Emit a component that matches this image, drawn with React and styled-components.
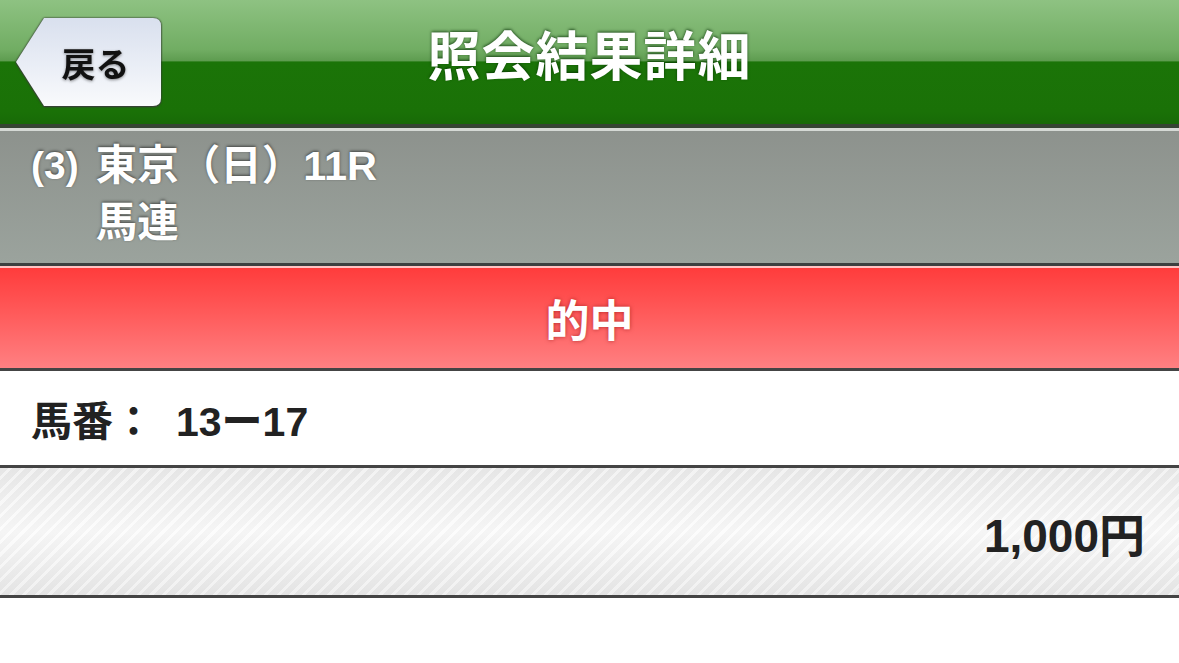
import styled, { createGlobalStyle } from 'styled-components'

const GlobalStyle = createGlobalStyle`
  html, body {
    margin: 0;
    padding: 0;
    background: #fff;
  }
  body {
    font-family: "Liberation Sans", "Noto Sans CJK JP", sans-serif;
    font-weight: 700;
  }
`

const result = {
  no: '(3)',
  race: '東京（日）11R',
  type: '馬連',
  status: '的中',
  horses: '13ー17',
  amount: '1,000円',
}

export default function App() {
  return (
    <>
      <GlobalStyle />
      <Page>
        <Header>
          <BackWrap>
            <BackButton type="button">戻る</BackButton>
          </BackWrap>
          <Title>照会結果詳細</Title>
          <div />
        </Header>

        <RaceInfo>
          <RaceNo>{result.no}</RaceNo>
          <RaceLines>
            <span>{result.race}</span>
            <span>{result.type}</span>
          </RaceLines>
        </RaceInfo>

        <Status>{result.status}</Status>

        <HorseRow>
          <span>馬番：</span>
          <span>{result.horses}</span>
        </HorseRow>

        <AmountRow>{result.amount}</AmountRow>
      </Page>
    </>
  )
}

const Page = styled.div`
  width: 100%;
  min-height: 663px;
  background: #fff;
`

const Header = styled.header`
  display: grid;
  grid-template-columns: 1fr auto 1fr;
  align-items: center;
  height: 124px;
  background: linear-gradient(
    to bottom,
    #8ec282 0%,
    #71ad63 40%,
    #5e9c50 49%,
    #1b7408 50%,
    #1a7107 90%,
    #186a07 100%
  );
  border-bottom: 4px solid #364433;
  box-shadow: 0 3px 0 #d5d9d5;
  margin-bottom: 3px;
`

const BackWrap = styled.div`
  justify-self: start;
  margin-left: 16px;
  filter: drop-shadow(0 0 1px #2e332c) drop-shadow(0 1px 0 #3a4a36);
`

const BackButton = styled.button`
  display: flex;
  align-items: center;
  justify-content: center;
  width: 145px;
  height: 88px;
  padding: 0 0 0 14px;
  border: none;
  clip-path: path('M28,0 H137 Q145,0 145,8 V80 Q145,88 137,88 H28 L0,44 Z');
  background: linear-gradient(to bottom, #d9e0ee 0%, #eaeef6 55%, #f9fafc 100%);
  color: #111;
  font-family: "Liberation Sans", "Noto Sans CJK JP", sans-serif;
  font-size: 34px;
  font-weight: 700;
  text-shadow: 0 1px 3px rgba(0, 0, 0, 0.45);
  cursor: pointer;
`

const Title = styled.h1`
  margin: 0 0 18px;
  color: #fff;
  font-size: 53px;
  font-weight: 700;
  letter-spacing: 1px;
  text-shadow: 0 -1px 3px rgba(0, 40, 0, 0.75);
`

const RaceInfo = styled.section`
  display: flex;
  align-items: flex-start;
  gap: 17px;
  height: 126px;
  padding: 6px 0 0 31px;
  background: linear-gradient(to bottom, #8d928d, #9ba39d);
  border-bottom: 3px solid #3d4040;
  color: #fff;
  line-height: 57px;
  text-shadow: 0 -1px 3px rgba(0, 0, 0, 0.55);
`

const RaceNo = styled.span`
  font-size: 39px;
  white-space: nowrap;
`

const RaceLines = styled.div`
  display: flex;
  flex-direction: column;
  font-size: 41.5px;
`

const Status = styled.section`
  display: flex;
  align-items: center;
  justify-content: center;
  height: 100px;
  border-top: 2px solid #ffc4c4;
  background: linear-gradient(to bottom, #ff3c3c 0%, #ff5a5a 45%, #ff8082 100%);
  border-bottom: 3px solid #444;
  color: #fff;
  font-size: 44px;
  text-shadow: 0 0 4px rgba(120, 0, 0, 0.55);
`

const HorseRow = styled.section`
  display: flex;
  align-items: center;
  gap: 22px;
  height: 94px;
  padding-left: 31px;
  border-bottom: 3px solid #444;
  color: #222;
  font-size: 41px;
`

const AmountRow = styled.section`
  display: flex;
  align-items: center;
  justify-content: flex-end;
  height: 127px;
  padding-right: 34px;
  border-bottom: 3px solid #444;
  background:
    linear-gradient(
      to bottom,
      rgba(0, 0, 0, 0.03) 0%,
      rgba(255, 255, 255, 0.45) 50%,
      rgba(0, 0, 0, 0.04) 100%
    ),
    repeating-linear-gradient(
      135deg,
      #ededed 0px,
      #ededed 6px,
      #fafafa 6px,
      #fafafa 9px
    );
  color: #222;
  font-size: 46px;
`
